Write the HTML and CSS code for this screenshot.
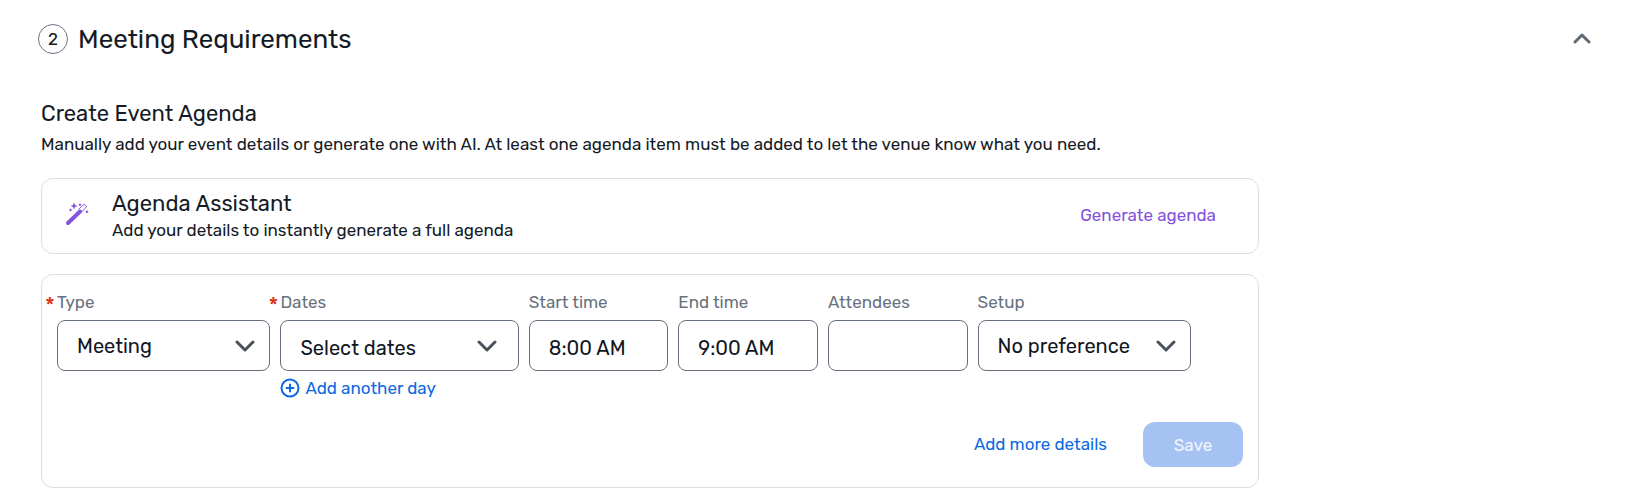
FILE: index.html
```html
<!DOCTYPE html>
<html lang="en">
<head>
<meta charset="utf-8">
<meta name="viewport" content="width=device-width, initial-scale=1">
<title>Meeting Requirements</title>
<link rel="stylesheet" href="styles.css">
</head>
<body>
<main class="section">
  <header class="section-header">
    <span class="step">2</span>
    <h1 class="section-title">Meeting Requirements</h1>
    <button class="collapse" type="button" aria-label="Collapse section">
      <svg width="20" height="12" viewBox="0 0 20 12"><path d="M3 9l7-7 7 7"/></svg>
    </button>
  </header>

  <div class="content">
    <h2 class="heading">Create Event Agenda</h2>
    <p class="description">Manually add your event details or generate one with AI. At least one agenda item must be added to let the venue know what you need.</p>

    <section class="card assistant">
      <svg class="wand" width="26" height="26" viewBox="0 0 26 26" aria-hidden="true">
        <path class="wand-stick" d="M4 22L16 10.500"/>
        <path class="wand-tip" d="M14.800 8.300l4-4a1.900 1.900 0 0 1 2.800 2.700l-4.100 4"/>
        <path class="wand-star" d="M10 1.500l1 2.500 2.500 1-2.500 1-1 2.500L9 6 6.500 5 9 4z"/>
        <path class="wand-star" d="M16 2.200l1.400 1.500L16 5.200l-1.400-1.500zM6.500 7.500L8 9l-1.500 1.500L5 9zM23 9.200l1.500 1.500-1.500 1.500-1.500-1.500z"/>
      </svg>
      <div class="assistant-text">
        <h2 class="heading">Agenda Assistant</h2>
        <p class="assistant-note">Add your details to instantly generate a full agenda</p>
      </div>
      <button class="link-button generate" type="button">Generate agenda</button>
    </section>

    <form class="card agenda-form">
      <div class="fields">
        <div class="field">
          <label class="label required" for="type">Type</label>
          <div class="control">
            <select class="box" id="type"><option>Meeting</option></select>
            <svg class="chevron" width="20" height="14" viewBox="0 0 20 14"><path d="M2 3l8 8 8-8"/></svg>
          </div>
        </div>
        <div class="field">
          <label class="label required" for="dates">Dates</label>
          <button class="box dates" id="dates" type="button">
            <span class="dates-text">Select dates</span>
            <svg class="dates-chevron" width="20" height="14" viewBox="0 0 20 14"><path d="M2 3l8 8 8-8"/></svg>
          </button>
          <button class="link-button add-day" type="button">
            <svg width="20" height="20" viewBox="0 0 20 20" aria-hidden="true"><circle cx="10" cy="10" r="8.500"/><path d="M10 6.500v7M6.500 10h7"/></svg>
            Add another day
          </button>
        </div>
        <div class="field">
          <label class="label" for="start">Start time</label>
          <input class="box time" id="start" type="text" value="8:00 AM">
        </div>
        <div class="field">
          <label class="label" for="end">End time</label>
          <input class="box time" id="end" type="text" value="9:00 AM">
        </div>
        <div class="field">
          <label class="label" for="attendees">Attendees</label>
          <input class="box time" id="attendees" type="text">
        </div>
        <div class="field">
          <label class="label" for="setup">Setup</label>
          <div class="control">
            <select class="box" id="setup"><option>No preference</option></select>
            <svg class="chevron" width="20" height="14" viewBox="0 0 20 14"><path d="M2 3l8 8 8-8"/></svg>
          </div>
        </div>
      </div>
      <div class="actions">
        <button class="link-button" type="button">Add more details</button>
        <button class="save" type="submit" disabled>Save</button>
      </div>
    </form>
  </div>
</main>
</body>
</html>
```
FILE: styles.css
```css
* { box-sizing: border-box; }

body {
  margin: 0;
  background: #fff;
  color: #151b26;
  font-family: Rubik, Roboto, "Liberation Sans", sans-serif;
  font-size: 17px;
  line-height: 24px;
}

h1, h2, p { margin: 0; font-weight: 400; }

button, input, select { font: inherit; color: inherit; }

button { cursor: pointer; }

svg { fill: none; stroke-linecap: round; stroke-linejoin: round; }

.section { padding: 21px 38px 0; }

.section-header { display: flex; align-items: center; gap: 10px; }

.step {
  display: flex;
  align-items: center;
  justify-content: center;
  width: 30px;
  height: 30px;
  border: 1px solid #6a7380;
  border-radius: 50%;
}

.section-title { padding-top: 2px; font-size: 26px; line-height: 34px; }

.collapse {
  display: flex;
  margin-left: auto;
  padding: 10px;
  border: 0;
  background: none;
  stroke: #606975;
  stroke-width: 3;
}

.content { max-width: 1221px; padding: 42px 0 0 3px; }

.heading { font-size: 22px; line-height: 30px; }

.description { padding: 3px 0 22px; }

.card { border: 1px solid #dcdddf; border-radius: 12px; }

.assistant {
  display: flex;
  align-items: center;
  min-height: 76px;
  padding: 8px 42px 8px 22px;
  margin-bottom: 20px;
}

.wand { margin-bottom: 4px; }
.wand-stick { stroke: #8453db; stroke-width: 4; }
.wand-tip { stroke: #8453db; stroke-width: 1; }
.wand-star { fill: #8453db; }

.assistant-text { padding: 0 0 2px 22px; }

.assistant-note { line-height: 22px; }

.link-button {
  padding: 0 0 2px;
  border: 0;
  background: none;
  color: #0b69e3;
}

.generate { margin-left: auto; color: #8453db; }

.agenda-form { padding: 15px 15px 20px; }

.fields {
  display: grid;
  grid-template-columns: 214fr 239fr 140fr 140fr 140fr 214fr;
  gap: 10px;
  padding-right: 52px;
}

.field { min-width: 0; }

.label {
  display: block;
  position: relative;
  padding-bottom: 6px;
  color: #68717d;
}

.required::before {
  content: "*";
  position: absolute;
  top: 4px;
  left: -12px;
  color: #dd2c0b;
  font-size: 22px;
}

.control { position: relative; }

.box {
  display: block;
  width: 100%;
  height: 51px;
  padding: 0 19px;
  border: 1px solid #66707c;
  border-radius: 8px;
  background: #fff;
  color: #12161e;
  font-size: 20px;
  appearance: none;
}

.time { padding-top: 5px; }

.chevron {
  position: absolute;
  top: 19px;
  right: 15px;
  pointer-events: none;
}

.chevron, .dates-chevron { stroke: #48505c; stroke-width: 3; }

.dates {
  display: flex;
  align-items: center;
  justify-content: space-between;
  padding-right: 21px;
}

.dates-text { padding-top: 5px; }

.add-day {
  display: flex;
  align-items: center;
  gap: 5px;
  padding-top: 5px;
  stroke: #0b69e3;
  stroke-width: 2;
}

.actions {
  display: flex;
  align-items: center;
  justify-content: flex-end;
  gap: 36px;
  padding-top: 20px;
}

.save {
  width: 100px;
  height: 45px;
  border: 0;
  border-radius: 12px;
  background: #a5c2f3;
  color: #f2f6fd;
}
```
